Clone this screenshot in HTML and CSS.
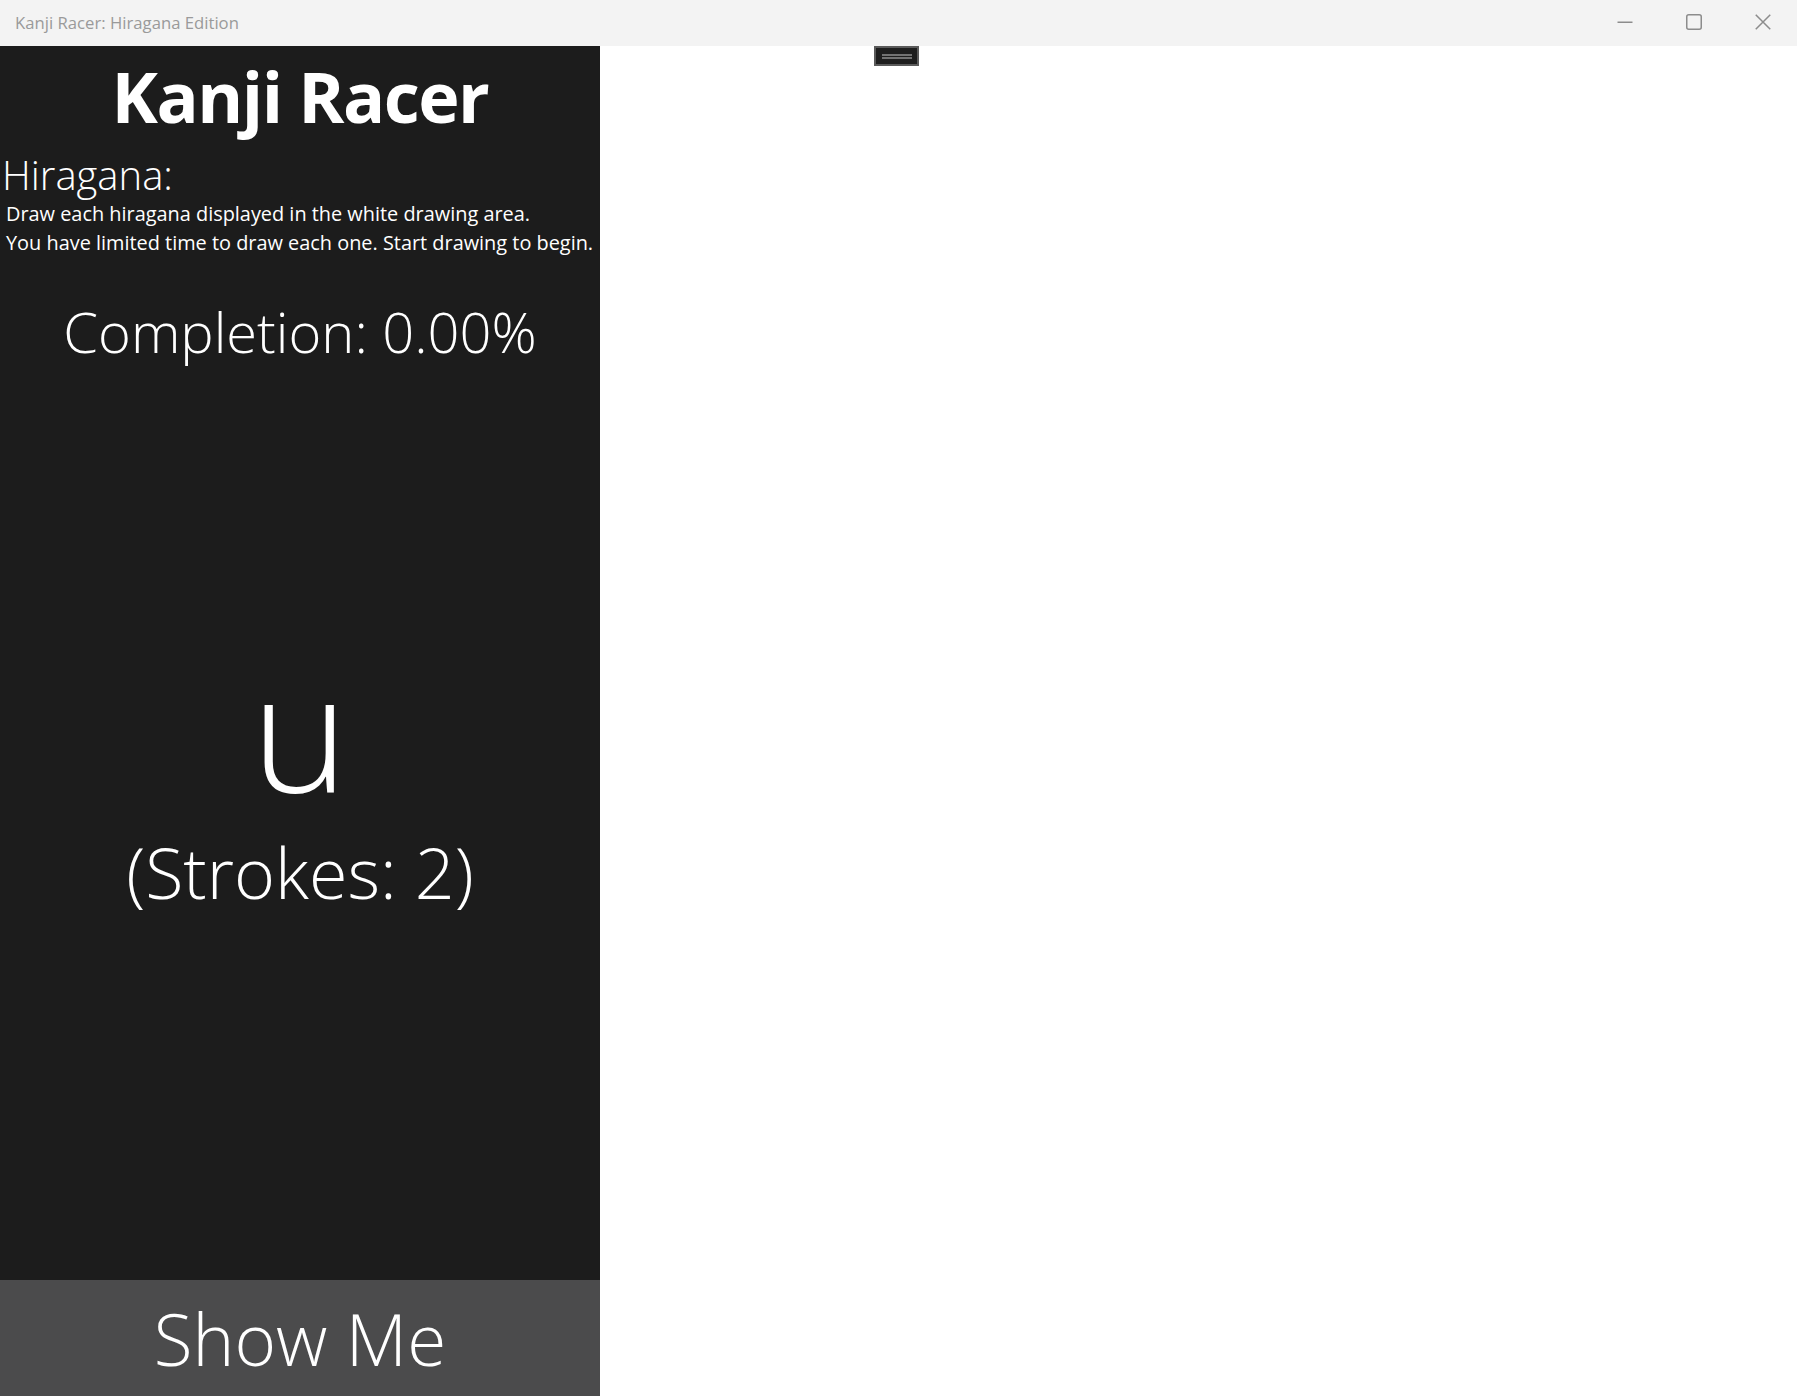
FILE: index.html
```html
<!DOCTYPE html>
<html lang="en">
<head>
  <meta charset="UTF-8">
  <title>Kanji Racer: Hiragana Edition</title>
  <link rel="stylesheet" href="styles.css">
</head>
<body>
  <!-- Window chrome -->
  <div id="titleBar">
    <span class="windowTitle">Kanji Racer: Hiragana Edition</span>
    <div class="windowButtons">
      <span class="winBtn">
        <svg width="16" height="16" viewBox="0 0 16 16"><path d="M0.5 8.25h15" stroke="#8c8c8c" stroke-width="1.5"/></svg>
      </span>
      <span class="winBtn">
        <svg width="16" height="16" viewBox="0 0 16 16"><rect x="0.75" y="0.75" width="14.5" height="14.5" rx="2" fill="none" stroke="#8c8c8c" stroke-width="1.5"/></svg>
      </span>
      <span class="winBtn">
        <svg width="16" height="16" viewBox="0 0 16 16"><path d="M0.75 0.75l14.5 14.5M15.25 0.75l-14.5 14.5" stroke="#8c8c8c" stroke-width="1.5"/></svg>
      </span>
    </div>
  </div>

  <div id="container">
    <!-- Left panel: instructions and current character -->
    <div id="sidePanel">
      <h1 class="appTitle">Kanji Racer</h1>
      <div class="modeLabel">Hiragana:</div>
      <div class="instructions">
        Draw each hiragana displayed in the white drawing area.<br>
        You have limited time to draw each one. Start drawing to begin.
      </div>
      <div class="completion">Completion: 0.00%</div>
      <div class="current">
        <div class="romaji">u</div>
        <div class="strokes">(Strokes: 2)</div>
      </div>
      <button id="showMeButton">Show Me</button>
    </div>

    <!-- Right panel: drawing area -->
    <div id="drawArea">
      <div class="dragHandle"><span></span><span></span></div>
    </div>
  </div>
</body>
</html>
```

FILE: styles.css
```css
/* Basic styling */
html, body {
  margin: 0;
  height: 100%;
}
body {
  font-family: "Open Sans", "Noto Sans", sans-serif;
  display: flex;
  flex-direction: column;
  overflow: hidden;
}
#titleBar {
  height: 46px;
  flex: none;
  background-color: #f3f3f3;
  display: flex;
  align-items: center;
  justify-content: space-between;
}
.windowTitle {
  margin-left: 15px;
  padding-bottom: 2px;
  font-size: 16.7px;
  color: #9a9a9a;
}
.windowButtons {
  display: flex;
  height: 100%;
}
.winBtn {
  width: 69px;
  display: flex;
  align-items: center;
  justify-content: center;
  padding-bottom: 3px;
}
/* Two-panel layout using flexbox */
#container {
  flex: 1;
  display: flex;
}
#sidePanel {
  width: 600px;
  background-color: #1c1c1c;
  color: #fff;
  display: flex;
  flex-direction: column;
}
.appTitle {
  margin: 0;
  text-align: center;
  font-size: 70px;
  font-weight: 700;
  line-height: 100px;
  letter-spacing: -1.5px;
}
.modeLabel {
  margin: 7px 0 0 2px;
  font-size: 40px;
  font-weight: 300;
  line-height: 44px;
}
.instructions {
  margin: 2px 0 0 6px;
  font-size: 19.9px;
  line-height: 29px;
}
.completion {
  margin-top: 34px;
  text-align: center;
  font-size: 56px;
  font-weight: 300;
  line-height: 80px;
}
.current {
  flex: 1;
  display: flex;
  flex-direction: column;
  justify-content: center;
  align-items: center;
  padding-bottom: 92px;
}
.romaji {
  font-size: 165px;
  font-weight: 300;
  line-height: 160px;
}
.strokes {
  margin-top: 24px;
  font-size: 70px;
  font-weight: 300;
  line-height: 80px;
}
#showMeButton {
  height: 116px;
  border: none;
  background-color: #4b4b4c;
  color: #fff;
  font-family: inherit;
  font-size: 71px;
  font-weight: 300;
  cursor: pointer;
}
#drawArea {
  flex: 1;
  background-color: #fff;
  position: relative;
}
/* Small grip at the top of the drawing area */
.dragHandle {
  position: absolute;
  left: 274px;
  top: 0;
  width: 41px;
  height: 16px;
  background-color: #1e1e1e;
  border: 2px solid #5a5a5a;
  display: flex;
  flex-direction: column;
  justify-content: center;
  align-items: center;
  gap: 1px;
}
.dragHandle span {
  width: 30px;
  height: 2px;
  background-color: #727272;
}
```
